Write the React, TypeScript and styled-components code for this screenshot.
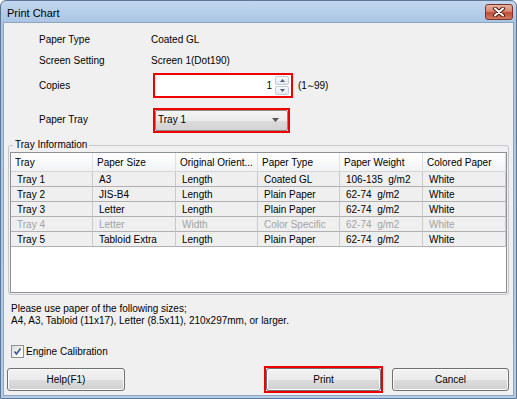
import styled, { createGlobalStyle } from "styled-components";

const GlobalStyle = createGlobalStyle`
    html, body { margin: 0; padding: 0; background: #ffffff; }
    body {
        font-family: "Liberation Sans", Arial, sans-serif;
        font-size: 10px;
        color: #000000;
    }
    * { box-sizing: border-box; }
`;

const Swindow = styled.div`
    width: 517px;
    height: 399px;
    display: flex;
    flex-direction: column;
    padding: 0 2px 2px 2px;
    border: 1px solid #5d7797;
    border-radius: 6px 6px 0 0;
    background: linear-gradient(180deg, #c2d7ee 0px, #a9c4e3 22px, #b4cce7 100%);
`;
const StitleBar = styled.div`
    height: 21px;
    display: flex;
    align-items: flex-start;
    justify-content: space-between;
`;
const StitleText = styled.span`
    margin: 6px 0 0 4px;
    font-size: 11px;
    color: #000000;
`;
const ScloseButton = styled.div`
    width: 28px;
    height: 16px;
    margin: 3px 1px 0 0;
    display: flex;
    align-items: center;
    justify-content: center;
    border: 1px solid #7a3428;
    border-radius: 3px;
    background: linear-gradient(180deg, #eab1a2 0%, #d98571 45%, #c24c35 55%, #d27a62 100%);
`;
const Sbody = styled.div`
    flex: 1;
    display: flex;
    flex-direction: column;
    border: 1px solid #8ea4bf;
    background: #f0f0f0;
`;
const Sform = styled.div`
    padding: 6px 0 0 35px;
    display: flex;
    flex-direction: column;
`;
const Srow = styled.div<{ $h: number; $mt?: number }>`
    height: ${(p) => p.$h}px;
    margin-top: ${(p) => p.$mt ?? 0}px;
    display: flex;
    align-items: center;
`;
const Slabel = styled.span<{ $shift?: number }>`
    width: 112px;
    margin-top: ${(p) => -(p.$shift ?? 0) * 2}px;
`;
const SredFrame = styled.div<{ $w: number }>`
    width: ${(p) => p.$w}px;
    height: 25px;
    margin-left: 2px;
    border: 2px solid #ee0000;
    display: flex;
`;
const SspinBox = styled.div`
    flex: 1;
    display: flex;
    align-items: center;
    background: #ffffff;
`;
const SspinValue = styled.span`
    flex: 1;
    text-align: right;
    padding-right: 3px;
`;
const SspinButtons = styled.div`
    width: 14px;
    margin-right: 2px;
    display: flex;
    flex-direction: column;
    gap: 1px;
`;
const SspinButton = styled.div`
    height: 9px;
    display: flex;
    align-items: center;
    justify-content: center;
    border: 1px solid #c3cbd6;
    border-radius: 2px;
    background: linear-gradient(180deg, #f7f8fa 0%, #e6e9ee 100%);
`;
const Srange = styled.span`
    margin-left: 5px;
`;
const Stilde = styled.span`
    letter-spacing: -2px;
    margin-left: -1px;
`;
const Scombo = styled.div`
    flex: 1;
    display: flex;
    align-items: center;
    justify-content: space-between;
    padding: 0 8px 2px 2px;
    border: 1px solid #8a8a8a;
    border-radius: 2px;
    background: linear-gradient(180deg, #f4f4f4 0%, #ebebeb 50%, #dcdcdc 51%, #d2d2d2 100%);
`;
const Sfieldset = styled.fieldset`
    margin: 6px 4px 0 4px;
    padding: 1px 1px 1px 1px;
    border: 1px solid #c4c8cc;
    border-radius: 3px;
    min-width: 0;
`;
const Slegend = styled.legend`
    margin-left: 3px;
    padding: 0 2px;
    font-size: 10px;
    line-height: 12px;
`;
const SlistView = styled.div`
    height: 141px;
    border: 1px solid #8c9097;
    background: #ffffff;
    display: grid;
    grid-template-columns: 82px 83px 82px 82px 83px 83px;
    grid-template-rows: 19px;
    grid-auto-rows: 15px;
    align-content: start;
`;
const SheadCell = styled.div`
    display: flex;
    align-items: center;
    padding-left: 4px;
    border-right: 1px solid #dcdfe3;
    border-bottom: 1px solid #d5d5d5;
    background: linear-gradient(180deg, #ffffff 0%, #f7f8f9 60%, #f1f2f4 100%);
    white-space: nowrap;
    overflow: hidden;
`;
const Scell = styled.div<{ $disabled?: boolean }>`
    display: flex;
    align-items: center;
    padding-left: 6px;
    border-right: 1px solid #c9c9c9;
    border-bottom: 1px solid #b0b0b0;
    background: #efefef;
    color: ${(p) => (p.$disabled ? "#a3a3a3" : "#000000")};
    white-space: nowrap;
    overflow: hidden;
`;
const Snote = styled.div`
    margin-top: 8px;
    padding-left: 7px;
    line-height: 12px;
`;
const ScheckRow = styled.label`
    height: 14px;
    margin-top: 17px;
    padding-left: 7px;
    display: flex;
    align-items: center;
    gap: 2px;
`;
const ScheckBox = styled.span`
    width: 13px;
    height: 13px;
    display: flex;
    align-items: center;
    justify-content: center;
    border: 1px solid #8e8f8f;
    background: linear-gradient(135deg, #dcdcdc 0%, #f4f4f4 60%, #ffffff 100%);
`;
const Sfooter = styled.div`
    margin-top: 8px;
    height: 27px;
    padding: 0 4px 0 3px;
    display: flex;
    align-items: center;
`;
const Sspacer = styled.div`
    flex: 1;
`;
const SbuttonFrame = styled.div`
    border: 2px solid #ee0000;
    margin-right: 9px;
`;
const Sbutton = styled.div<{ $w: number }>`
    width: ${(p) => p.$w}px;
    height: 23px;
    display: flex;
    align-items: center;
    justify-content: center;
    border: 1px solid #707070;
    border-radius: 3px;
    box-shadow: inset 0 0 0 1px #fbfbfb;
    background: linear-gradient(180deg, #f2f2f2 0%, #ebebeb 50%, #dddddd 51%, #cfcfcf 100%);
`;

type Tray = {
    tray: string;
    size: string;
    orient: string;
    type: string;
    weight: string;
    color: string;
    disabled?: boolean;
};

const HEADERS = ["Tray", "Paper Size", "Original Orient...", "Paper Type", "Paper Weight", "Colored Paper"];

const TRAYS: Tray[] = [
    { tray: "Tray 1", size: "A3", orient: "Length", type: "Coated GL", weight: "106-135\u00a0 g/m2", color: "White" },
    { tray: "Tray 2", size: "JIS-B4", orient: "Length", type: "Plain Paper", weight: "62-74\u00a0 g/m2", color: "White" },
    { tray: "Tray 3", size: "Letter", orient: "Length", type: "Plain Paper", weight: "62-74\u00a0 g/m2", color: "White" },
    { tray: "Tray 4", size: "Letter", orient: "Width", type: "Color Specific", weight: "62-74\u00a0 g/m2", color: "White", disabled: true },
    { tray: "Tray 5", size: "Tabloid Extra", orient: "Length", type: "Plain Paper", weight: "62-74\u00a0 g/m2", color: "White" },
];

const App = () => {
    return (
        <>
            <GlobalStyle />
            <Swindow>
                <StitleBar>
                    <StitleText>Print Chart</StitleText>
                    <ScloseButton>
                        <svg width="14" height="10" viewBox="0 0 14 10">
                            <path d="M3 1.5 L11 8.5 M11 1.5 L3 8.5" stroke="#4a1d15" strokeWidth="4" strokeLinecap="round" />
                            <path d="M3 1.5 L11 8.5 M11 1.5 L3 8.5" stroke="#ffffff" strokeWidth="2" strokeLinecap="round" />
                        </svg>
                    </ScloseButton>
                </StitleBar>
                <Sbody>
                    <Sform>
                        <Srow $h={21}>
                            <Slabel>Paper Type</Slabel>
                            <span>Coated GL</span>
                        </Srow>
                        <Srow $h={21}>
                            <Slabel>Screen Setting</Slabel>
                            <span>Screen 1(Dot190)</span>
                        </Srow>
                        <Srow $h={25} $mt={2}>
                            <Slabel>Copies</Slabel>
                            <SredFrame $w={140}>
                                <SspinBox>
                                    <SspinValue>1</SspinValue>
                                    <SspinButtons>
                                        <SspinButton>
                                            <svg width="5" height="3" viewBox="0 0 5 3"><path d="M0 3 L2.5 0 L5 3 Z" fill="#4d6185" /></svg>
                                        </SspinButton>
                                        <SspinButton>
                                            <svg width="5" height="3" viewBox="0 0 5 3"><path d="M0 0 L2.5 3 L5 0 Z" fill="#4d6185" /></svg>
                                        </SspinButton>
                                    </SspinButtons>
                                </SspinBox>
                            </SredFrame>
                            <Srange>(1<Stilde>～</Stilde>99)</Srange>
                        </Srow>
                        <Srow $h={25} $mt={10}>
                            <Slabel $shift={1}>Paper Tray</Slabel>
                            <SredFrame $w={137}>
                                <Scombo>
                                    <span>Tray 1</span>
                                    <svg width="7" height="4" viewBox="0 0 7 4"><path d="M0 0 L7 0 L3.5 4 Z" fill="#555555" /></svg>
                                </Scombo>
                            </SredFrame>
                        </Srow>
                    </Sform>
                    <Sfieldset>
                        <Slegend>Tray Information</Slegend>
                        <SlistView>
                            {HEADERS.map((h) => (
                                <SheadCell key={h}>{h}</SheadCell>
                            ))}
                            {TRAYS.map((t) => (
                                [t.tray, t.size, t.orient, t.type, t.weight, t.color].map((v, i) => (
                                    <Scell key={t.tray + i} $disabled={t.disabled}>{v}</Scell>
                                ))
                            ))}
                        </SlistView>
                    </Sfieldset>
                    <Snote>
                        Please use paper of the following sizes;<br />
                        A4, A3, Tabloid (11x17), Letter (8.5x11), 210x297mm, or larger.
                    </Snote>
                    <ScheckRow>
                        <ScheckBox>
                            <svg width="9" height="9" viewBox="0 0 9 9">
                                <path d="M1.5 4.5 L3.5 7 L7.5 1.5" stroke="#3c5596" strokeWidth="1.6" fill="none" />
                            </svg>
                        </ScheckBox>
                        <span>Engine Calibration</span>
                    </ScheckRow>
                    <Sfooter>
                        <Sbutton $w={118}>Help(F1)</Sbutton>
                        <Sspacer />
                        <SbuttonFrame>
                            <Sbutton $w={115}>Print</Sbutton>
                        </SbuttonFrame>
                        <Sbutton $w={117}>Cancel</Sbutton>
                    </Sfooter>
                </Sbody>
            </Swindow>
        </>
    );
};

export default App;
